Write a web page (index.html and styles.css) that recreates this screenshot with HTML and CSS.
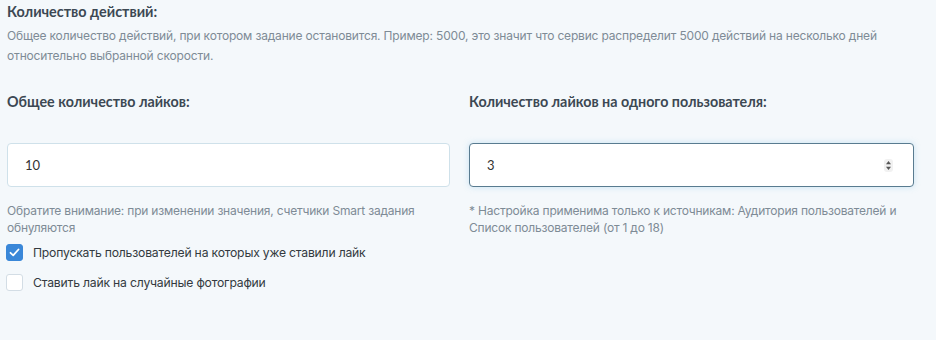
FILE: index.html
```html
<!DOCTYPE html>
<html lang="ru">
<head>
<meta charset="utf-8">
<link rel="stylesheet" href="styles.css">
</head>
<body>
<div class="page">
  <section class="intro">
    <h2 class="title">Количество действий:</h2>
    <p class="desc">Общее количество действий, при котором задание остановится. Пример: 5000, это значит что сервис распределит 5000 действий на несколько дней относительно выбранной скорости.</p>
  </section>
  <div class="grid">
    <div class="col">
      <label class="label">Общее количество лайков:</label>
      <div class="input"><span>10</span></div>
      <p class="note">Обратите внимание: при изменении значения, счетчики Smart задания обнуляются</p>
      <div class="checks">
        <div class="check"><span class="box on"><svg width="11" height="9" viewBox="0 0 11 9"><path d="M1.5 4.8 L4.2 7.3 L9.5 1.5" fill="none" stroke="#fff" stroke-width="1.8" stroke-linecap="round" stroke-linejoin="round"/></svg></span><span class="ctext">Пропускать пользователей на которых уже ставили лайк</span></div>
        <div class="check"><span class="box"></span><span class="ctext">Ставить лайк на случайные фотографии</span></div>
      </div>
    </div>
    <div class="col">
      <label class="label">Количество лайков на одного пользователя:</label>
      <div class="input focus"><span>3</span>
        <span class="spin"><svg width="7" height="11" viewBox="0 0 7 11"><path d="M3.5 1 L6 4.2 H1 Z" fill="#555"/><path d="M3.5 10 L6 6.8 H1 Z" fill="#555"/></svg></span>
      </div>
      <p class="note">* Настройка применима только к источникам: Аудитория пользователей и Список пользователей (от 1 до 18)</p>
    </div>
  </div>
</div>
</body>
</html>
```
FILE: styles.css
```css
html, body { margin: 0; padding: 0; }
body { background: #f4f8fb; width: 936px; height: 340px; overflow: hidden; }
.page { padding: 2px 22px 0 7px; }
.title { margin: 0; font: 700 14.4px/20px "Lato", sans-serif; color: #3c4853; }
.desc { margin: 4px 0 0; font: 400 12px/20px "Inter", sans-serif; color: #7e8b96; letter-spacing: -0.17px; }
.grid { display: grid; grid-template-columns: 443px 445px; column-gap: 19px; margin-top: 26px; }
.col { display: flex; flex-direction: column; }
.label { font: 700 14.3px/20px "Lato", sans-serif; color: #3c4853; height: 20px; }
.input { margin-top: 31px; height: 44px; box-sizing: border-box; background: #fff; border: 1px solid #cfe1ea; border-radius: 4px; display: flex; align-items: center; justify-content: space-between; padding: 0 20px 0 17px; font: 400 13px "Lato", sans-serif; color: #333; }
.input.focus { border-color: #597b90; box-shadow: 0 0 6px rgba(120,190,230,0.35); }
.spin { display: flex; align-items: center; justify-content: center; width: 9px; height: 13px; border-radius: 3px; background: #f1f1f1; }
.spin svg { display: block; }
.note { margin: 15px 0 0; font: 400 12px/17px "Inter", sans-serif; color: #7e8b96; letter-spacing: -0.2px; }
.checks { margin-top: 8px; display: flex; flex-direction: column; gap: 13px; }
.check { display: flex; align-items: center; gap: 10px; height: 17px; margin-left: -1px; }
.box { width: 17px; height: 17px; box-sizing: border-box; border: 1px solid #d3dde5; border-radius: 3px; background: #fff; display: flex; align-items: center; justify-content: center; }
.box.on { background: #3a87d8; border-color: #3a87d8; }
.ctext { font: 400 12.2px/17px "Inter", sans-serif; color: #333a40; letter-spacing: -0.2px; }
```
